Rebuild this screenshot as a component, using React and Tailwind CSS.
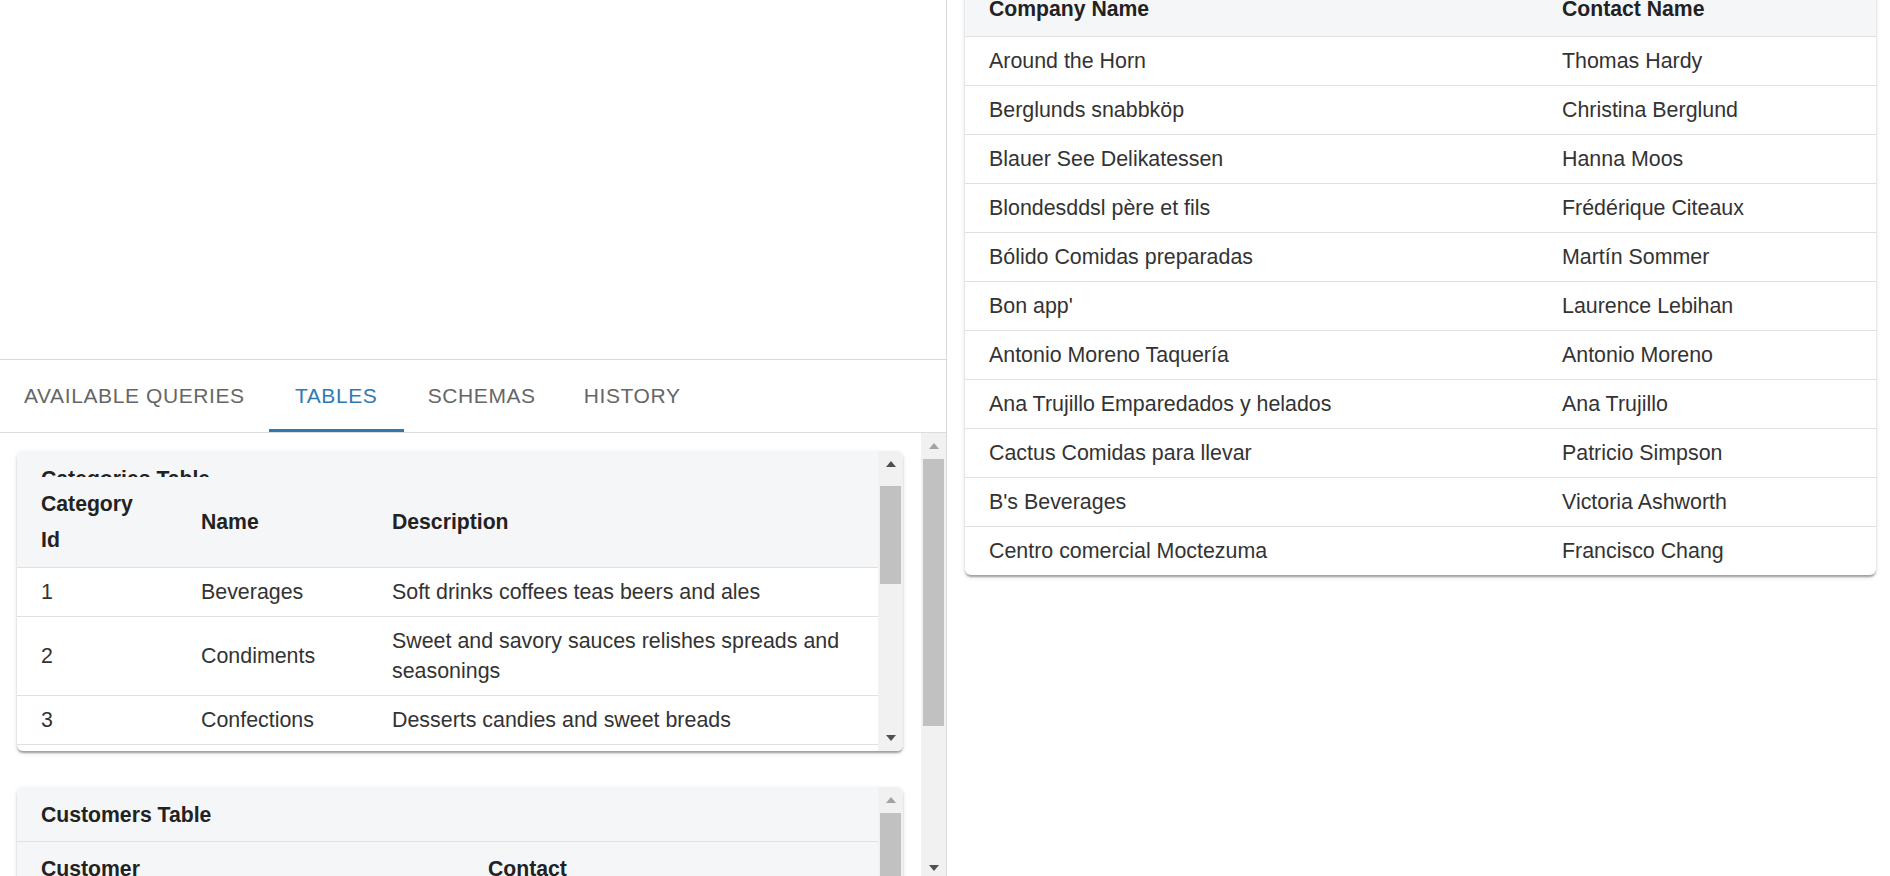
import React from "react";

const Arrow = ({ dir, color }) => (
  <svg width="10" height="6" viewBox="0 0 10 6">
    <polygon points={dir === "up" ? "0,6 5,0 10,6" : "0,0 10,0 5,6"} fill={color} />
  </svg>
);

const customers = [
  ["Around the Horn", "Thomas Hardy"],
  ["Berglunds snabbköp", "Christina Berglund"],
  ["Blauer See Delikatessen", "Hanna Moos"],
  ["Blondesddsl père et fils", "Frédérique Citeaux"],
  ["Bólido Comidas preparadas", "Martín Sommer"],
  ["Bon app'", "Laurence Lebihan"],
  ["Antonio Moreno Taquería", "Antonio Moreno"],
  ["Ana Trujillo Emparedados y helados", "Ana Trujillo"],
  ["Cactus Comidas para llevar", "Patricio Simpson"],
  ["B's Beverages", "Victoria Ashworth"],
  ["Centro comercial Moctezuma", "Francisco Chang"],
];

const categories = [
  ["1", "Beverages", "Soft drinks coffees teas beers and ales"],
  ["2", "Condiments", "Sweet and savory sauces relishes spreads and seasonings"],
  ["3", "Confections", "Desserts candies and sweet breads"],
];

const shadow =
  "shadow-[0_3px_2px_-1px_rgba(0,0,0,0.2),0_2px_2px_0_rgba(0,0,0,0.14),0_2px_5px_0_rgba(0,0,0,0.12)]";

export default function App() {
  return (
    <div className="flex w-[1890px] h-[876px] overflow-hidden bg-white font-['Liberation_Sans',Arial,sans-serif] text-[21.4px]">
      {/* LEFT PANEL */}
      <div className="w-[947px] shrink-0 border-r border-[#d9d9d9] flex flex-col h-full">
        <div className="h-[360px] shrink-0 border-b border-[#d9d9d9]" />
        {/* Tabs */}
        <div className="h-[73px] shrink-0 border-b border-[#dcdcdc] flex items-stretch text-[21px]">
          <div className="px-[24px] min-w-[135px] flex items-center justify-center uppercase tracking-[0.6px] text-[#666666] border-b-[3px] border-transparent pt-[3px]">
            Available Queries
          </div>
          <div className="px-[24px] min-w-[135px] flex items-center justify-center uppercase tracking-[0.6px] text-[#2f7ab3] border-b-[3px] border-[#2f79b0] pt-[3px]">
            Tables
          </div>
          <div className="px-[24px] min-w-[135px] flex items-center justify-center uppercase tracking-[0.6px] text-[#666666] border-b-[3px] border-transparent pt-[3px]">
            Schemas
          </div>
          <div className="px-[24px] min-w-[135px] flex items-center justify-center uppercase tracking-[0.6px] text-[#666666] border-b-[3px] border-transparent pt-[3px]">
            History
          </div>
        </div>
        {/* Scroll area */}
        <div className="flex flex-1 min-h-0 overflow-hidden">
          <div className="flex-1 min-w-0 pl-[17px] pt-[18px] flex flex-col gap-[36px] overflow-hidden">
            {/* Categories card */}
            <div className={`w-[886px] h-[300px] shrink-0 rounded-[6px] bg-white flex overflow-hidden ${shadow}`}>
              <div className="flex-1 min-w-0 flex flex-col overflow-hidden">
                <div className="h-[26px] shrink-0 overflow-hidden bg-[#f5f6f8] px-[24px] pt-[13px] leading-[30px] font-bold text-[#222222] text-[21.2px]">
                  Categories Table
                </div>
                <table className="w-full table-fixed border-collapse">
                  <colgroup>
                    <col className="w-[160px]" />
                    <col className="w-[191px]" />
                    <col />
                  </colgroup>
                  <thead>
                    <tr className="bg-[#f5f6f8]">
                      <th className="text-left align-middle font-bold text-[#222222] text-[21.2px] leading-[36px] px-[24px] py-[9px] border-b border-[#e0e0e0]">
                        Category Id
                      </th>
                      <th className="text-left align-middle font-bold text-[#222222] text-[21.2px] leading-[36px] px-[24px] py-[9px] border-b border-[#e0e0e0]">
                        Name
                      </th>
                      <th className="text-left align-middle font-bold text-[#222222] text-[21.2px] leading-[36px] px-[24px] py-[9px] border-b border-[#e0e0e0]">
                        Description
                      </th>
                    </tr>
                  </thead>
                  <tbody>
                    {categories.map((r) => (
                      <tr key={r[0]}>
                        {r.map((c, i) => (
                          <td
                            key={i}
                            className="text-left align-middle text-[#333333] leading-[30px] px-[24px] py-[9px] border-b border-[#e0e0e0]"
                          >
                            {c}
                          </td>
                        ))}
                      </tr>
                    ))}
                  </tbody>
                </table>
              </div>
              <div className="w-[25px] shrink-0 bg-[#f1f1f1] flex flex-col">
                <div className="h-[25px] shrink-0 flex items-center justify-center">
                  <Arrow dir="up" color="#505050" />
                </div>
                <div className="flex-1 px-[2px] pt-[10px]">
                  <div className="h-[98px] bg-[#c1c1c1]" />
                </div>
                <div className="h-[25px] shrink-0 flex items-start justify-center pt-[9px]">
                  <Arrow dir="down" color="#505050" />
                </div>
              </div>
            </div>
            {/* Customers card */}
            <div className={`w-[886px] h-[300px] shrink-0 rounded-[6px] bg-white flex overflow-hidden ${shadow}`}>
              <div className="flex-1 min-w-0 flex flex-col overflow-hidden">
                <div className="h-[55px] shrink-0 bg-[#f5f6f8] px-[24px] pt-[13px] leading-[30px] font-bold text-[#222222] text-[21.2px] border-b border-[#e0e0e0]">
                  Customers Table
                </div>
                <table className="w-full table-fixed border-collapse">
                  <colgroup>
                    <col className="w-[447px]" />
                    <col />
                  </colgroup>
                  <thead>
                    <tr className="bg-[#f5f6f8]">
                      <th className="text-left align-top font-bold text-[#222222] text-[21.2px] leading-[36px] px-[24px] py-[9px] border-b border-[#e0e0e0]">
                        Customer
                      </th>
                      <th className="text-left align-top font-bold text-[#222222] text-[21.2px] leading-[36px] px-[24px] py-[9px] border-b border-[#e0e0e0]">
                        Contact
                      </th>
                    </tr>
                  </thead>
                </table>
              </div>
              <div className="w-[25px] shrink-0 bg-[#f1f1f1] flex flex-col">
                <div className="h-[25px] shrink-0 flex items-center justify-center">
                  <Arrow dir="up" color="#a3a3a3" />
                </div>
                <div className="flex-1 px-[2px] pt-[1px]">
                  <div className="h-[200px] bg-[#c1c1c1]" />
                </div>
              </div>
            </div>
          </div>
          {/* outer scrollbar */}
          <div className="w-[25px] shrink-0 bg-[#f1f1f1] flex flex-col">
            <div className="h-[25px] shrink-0 flex items-center justify-center">
              <Arrow dir="up" color="#a3a3a3" />
            </div>
            <div className="flex-1 px-[2px] pt-[1px]">
              <div className="h-[267px] bg-[#c1c1c1]" />
            </div>
            <div className="h-[16px] shrink-0 flex items-center justify-center">
              <Arrow dir="down" color="#505050" />
            </div>
          </div>
        </div>
      </div>

      {/* RIGHT PANEL */}
      <div className="flex-1 min-w-0 pl-[18px] pr-[14px]">
        <div className={`-mt-[18px] rounded-[6px] bg-white overflow-hidden ${shadow}`}>
          <table className="w-full table-fixed border-collapse">
            <colgroup>
              <col className="w-[573px]" />
              <col />
            </colgroup>
            <thead>
              <tr className="bg-[#f5f6f8]">
                <th className="text-left font-bold text-[#222222] text-[21.2px] leading-[36px] px-[24px] py-[9px] border-b border-[#e0e0e0]">
                  Company Name
                </th>
                <th className="text-left font-bold text-[#222222] text-[21.2px] leading-[36px] px-[24px] py-[9px] border-b border-[#e0e0e0]">
                  Contact Name
                </th>
              </tr>
            </thead>
            <tbody>
              {customers.map((r, idx) => (
                <tr key={r[0]}>
                  <td
                    className={`text-left text-[#333333] leading-[30px] px-[24px] py-[9px] ${
                      idx === customers.length - 1 ? "" : "border-b border-[#e0e0e0]"
                    }`}
                  >
                    {r[0]}
                  </td>
                  <td
                    className={`text-left text-[#333333] leading-[30px] px-[24px] py-[9px] ${
                      idx === customers.length - 1 ? "" : "border-b border-[#e0e0e0]"
                    }`}
                  >
                    {r[1]}
                  </td>
                </tr>
              ))}
            </tbody>
          </table>
        </div>
      </div>
    </div>
  );
}
